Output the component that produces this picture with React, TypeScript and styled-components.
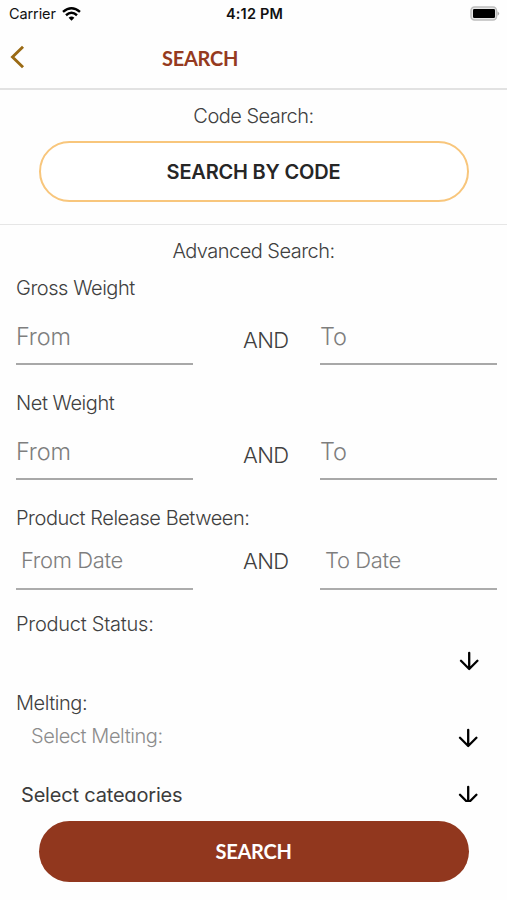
import React from "react";
import styled, { createGlobalStyle } from "styled-components";

const GlobalStyle = createGlobalStyle`
  * { box-sizing: border-box; }
  body { margin: 0; background: #fefefe; }
`;

const Screen = styled.main`
  display: flex;
  flex-direction: column;
  width: 507px;
  height: 900px;
  overflow: hidden;
  background: #fefefe;
  color: #404040;
  font-family: Inter, "Liberation Sans", sans-serif;
`;

const StatusBar = styled.div`
  display: grid;
  grid-template-columns: 1fr auto 1fr;
  align-items: center;
  height: 28px;
  padding: 0 7px 1px 9px;
  color: #111;
  font-size: 14.5px;
`;

const Carrier = styled.div`
  display: flex;
  align-items: center;
  gap: 6px;
  letter-spacing: -0.1px;
`;

const Clock = styled.time`
  font-size: 14.5px;
  font-weight: 600;
  letter-spacing: 0.2px;
`;

const BatterySlot = styled.div`
  display: flex;
  justify-content: flex-end;
`;

const NavBar = styled.header`
  display: grid;
  grid-template-columns: 162px 1fr;
  align-items: center;
  height: 62px;
  border-bottom: 2px solid #e2e2e2;
`;

const BackButton = styled.button`
  display: flex;
  justify-self: start;
  padding: 0 0 3px 10px;
  border: 0;
  background: none;
`;

const Title = styled.h1`
  margin: 0;
  color: #953a20;
  font: 700 20px/24px Lato, sans-serif;
  letter-spacing: -0.25px;
`;

const CodeSection = styled.section`
  display: flex;
  flex-direction: column;
  align-items: center;
  gap: 13px;
  height: 135px;
  padding-top: 14px;
  border-bottom: 1px solid #e6e6e6;
`;

const SectionHeading = styled.h2`
  margin: 0;
  font-size: 20px;
  font-weight: 300;
  line-height: 24px;
  letter-spacing: -0.52px;
  text-align: center;
`;

const OutlineButton = styled.button`
  width: 430px;
  height: 61px;
  padding: 0;
  border: 2px solid #f8c67c;
  border-radius: 31px;
  background: #fff;
  color: #262626;
  font: 600 20px/24px Inter, sans-serif;
  letter-spacing: -0.2px;
`;

const Form = styled.section`
  height: 577px;
  padding-top: 14px;
  overflow: hidden;
`;

const FieldGroup = styled.div<{ $gap: number }>`
  margin-bottom: ${(p) => p.$gap}px;
`;

const Fields = styled.div`
  padding: 13px 10px 0 16px;
`;

const Label = styled.div<{ $tracking?: number }>`
  font-size: 20px;
  font-weight: 300;
  line-height: 24px;
  letter-spacing: ${(p) => p.$tracking ?? -0.45}px;
  white-space: nowrap;
`;

const RangeRow = styled.div<{ $date?: boolean }>`
  display: grid;
  grid-template-columns: 177px 1fr 177px;
  height: ${(p) => (p.$date ? 60 : 65)}px;
`;

const RangeField = styled.div<{ $date?: boolean }>`
  padding: ${(p) => (p.$date ? "18px 0 0 5px" : "24px 0 0 0")};
  border-bottom: 2px solid ${(p) => (p.$date ? "#acacac" : "#a8a8a8")};
  color: #7e7e7e;
  font-size: ${(p) => (p.$date ? 22 : 23.5)}px;
  font-weight: 300;
  line-height: 25px;
  letter-spacing: ${(p) => (p.$date ? -0.38 : -0.2)}px;
`;

const Conjunction = styled.div<{ $date?: boolean }>`
  padding: ${(p) => (p.$date ? 19 : 28)}px 0 0 50px;
  font-size: 22px;
  font-weight: 300;
  line-height: 25px;
  letter-spacing: -0.6px;
`;

const SelectRow = styled.div<{ $height: number; $indent: number; $right: number }>`
  display: flex;
  align-items: center;
  justify-content: space-between;
  height: ${(p) => p.$height}px;
  padding: 0 ${(p) => p.$right}px 0 ${(p) => p.$indent}px;
`;

const SelectText = styled.span<{ $filled?: boolean }>`
  color: ${(p) => (p.$filled ? "#3c3c3c" : "#8c8c8c")};
  font-size: 20px;
  font-weight: ${(p) => (p.$filled ? 400 : 300)};
  line-height: 24px;
  letter-spacing: ${(p) => (p.$filled ? -0.19 : -0.42)}px;
`;

const ArrowSlot = styled.span<{ $drop?: number; $lift?: number }>`
  display: flex;
  padding-top: ${(p) => p.$drop ?? 0}px;
  padding-bottom: ${(p) => p.$lift ?? 0}px;
`;

const Footer = styled.footer`
  display: flex;
  justify-content: center;
  padding-top: 19px;
`;

const SubmitButton = styled.button`
  width: 430px;
  height: 61px;
  padding: 0 0 2px;
  border: 0;
  border-radius: 31px;
  background: #91371e;
  color: #fff;
  font: 700 20px/24px Lato, sans-serif;
  letter-spacing: -0.25px;
`;

const WifiIcon = () => (
  <svg width="19" height="14" viewBox="0 0 19 14" fill="none" stroke="#000" strokeWidth="2.5">
    <path d="M1 4.9Q9.5-2.3 18 4.9" />
    <path d="M4 8.2Q9.5 3.4 15 8.2" />
    <path d="M6.6 10.8Q9.5 8.2 12.4 10.8L9.5 13.8Z" fill="#000" stroke="none" />
  </svg>
);

const BatteryIcon = () => (
  <svg width="31" height="15" viewBox="0 0 31 15">
    <rect x="2" y="1" width="25.5" height="13" rx="3.5" fill="#e8e8e8" stroke="#bdbdbd" strokeWidth="1.5" />
    <rect x="4" y="3" width="22" height="9" rx="1.2" fill="#000" />
    <path d="M28.5 5.2Q31.8 7.5 28.5 9.8Z" fill="#aaa" />
  </svg>
);

const BackIcon = () => (
  <svg width="15" height="24" viewBox="0 0 15 24" fill="none" stroke="#9a6a14" strokeWidth="2.9">
    <path d="M13 1.8L2.5 12L13 22.2" />
  </svg>
);

const DownArrow = () => (
  <svg width="20" height="20" viewBox="0 0 20 20" fill="none" stroke="#000" strokeWidth="2.3" strokeLinecap="round" strokeLinejoin="round">
    <path d="M10.2 1.8V18M2 9.8L10.2 18L18.4 9.8" />
  </svg>
);

interface RangeProps {
  label: string;
  from: string;
  to: string;
  gap: number;
  date?: boolean;
}

const Range = ({ label, from, to, gap, date }: RangeProps) => (
  <FieldGroup $gap={gap}>
    <Label>{label}</Label>
    <RangeRow $date={date}>
      <RangeField $date={date}>{from}</RangeField>
      <Conjunction $date={date}>AND</Conjunction>
      <RangeField $date={date}>{to}</RangeField>
    </RangeRow>
  </FieldGroup>
);

export default function App() {
  return (
    <Screen>
      <GlobalStyle />
      <StatusBar>
        <Carrier>
          <span>Carrier</span>
          <WifiIcon />
        </Carrier>
        <Clock>4:12 PM</Clock>
        <BatterySlot>
          <BatteryIcon />
        </BatterySlot>
      </StatusBar>
      <NavBar>
        <BackButton aria-label="Back">
          <BackIcon />
        </BackButton>
        <Title>SEARCH</Title>
      </NavBar>
      <CodeSection>
        <SectionHeading>Code Search:</SectionHeading>
        <OutlineButton>SEARCH BY CODE</OutlineButton>
      </CodeSection>
      <Form>
        <SectionHeading>Advanced Search:</SectionHeading>
        <Fields>
          <Range label="Gross Weight" from="From" to="To" gap={26} />
          <Range label="Net Weight" from="From" to="To" gap={26} />
          <Range label="Product Release Between:" from="From Date" to="To Date" gap={22} date />
          <Label $tracking={-0.25}>Product Status:</Label>
          <SelectRow $height={55} $indent={0} $right={18}>
            <SelectText />
            <ArrowSlot $lift={5}>
              <DownArrow />
            </ArrowSlot>
          </SelectRow>
          <Label>Melting:</Label>
          <SelectRow $height={42} $indent={15} $right={19}>
            <SelectText>Select Melting:</SelectText>
            <ArrowSlot $drop={4}>
              <DownArrow />
            </ArrowSlot>
          </SelectRow>
          <SelectRow $height={76} $indent={5} $right={19}>
            <SelectText $filled>Select categories</SelectText>
            <ArrowSlot>
              <DownArrow />
            </ArrowSlot>
          </SelectRow>
        </Fields>
      </Form>
      <Footer>
        <SubmitButton>SEARCH</SubmitButton>
      </Footer>
    </Screen>
  );
}
